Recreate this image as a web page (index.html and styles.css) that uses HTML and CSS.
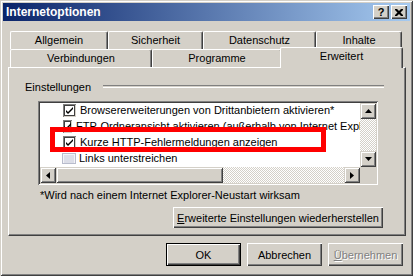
FILE: index.html
```html
<!DOCTYPE html>
<html lang="de">
<head>
    <meta charset="UTF-8">
    <title>Internetoptionen</title>
    <link rel="stylesheet" href="styles.css">
</head>
<body>
    <div class="window">
        <div class="titlebar">
            <span class="title">Internetoptionen</span>
            <div class="title-buttons">
                <span class="tbtn help">?</span>
                <span class="tbtn">
                    <svg width="8" height="7" viewBox="0 0 8 7">
                        <path d="M0 0h2l2 2 2-2h2v1l-2.5 2.5L8 6v1H6L4 5 2 7H0V6l2.5-2.5L0 1z" fill="#000"/>
                    </svg>
                </span>
            </div>
        </div>

        <div class="dialog-body">
            <div class="tabs">
                <div class="tab-row">
                    <div class="tab w-allgemein">Allgemein</div>
                    <div class="tab w-sicherheit">Sicherheit</div>
                    <div class="tab w-datenschutz">Datenschutz</div>
                    <div class="tab w-inhalte">Inhalte</div>
                </div>
                <div class="tab-row">
                    <div class="tab w-verbindungen">Verbindungen</div>
                    <div class="tab w-programme">Programme</div>
                    <div class="tab tab-active">Erweitert</div>
                </div>
            </div>

            <div class="panel">
                <div class="group-head">
                    <span class="group-label">Einstellungen</span>
                    <span class="etched-line"></span>
                </div>

                <div class="listbox">
                    <div class="list-rows">
                        <div class="row">
                            <span class="check"><svg width="9" height="9" viewBox="0 0 9 9"><path d="M1 4l2 2 5-5v2L3 8 1 6z" fill="#000"/></svg></span>
                            <span class="row-text">Browsererweiterungen von Drittanbietern aktivieren*</span>
                        </div>
                        <div class="row">
                            <span class="check"><svg width="9" height="9" viewBox="0 0 9 9"><path d="M1 4l2 2 5-5v2L3 8 1 6z" fill="#000"/></svg></span>
                            <span class="row-text">FTP-Ordneransicht aktivieren (außerhalb von Internet Explorer)</span>
                        </div>
                        <div class="row">
                            <span class="check"><svg width="9" height="9" viewBox="0 0 9 9"><path d="M1 4l2 2 5-5v2L3 8 1 6z" fill="#000"/></svg></span>
                            <span class="row-text">Kurze HTTP-Fehlermeldungen anzeigen</span>
                        </div>
                        <div class="row">
                            <span class="group-icon">
                                <svg width="14" height="11" viewBox="0 0 14 11">
                                    <rect x="0.5" y="0.5" width="13" height="10" fill="#f4f4f8" stroke="#b8bccc"/>
                                    <path d="M2 3h10M2 5h10M2 7h10M2 9h10" stroke="#c4c8d8"/>
                                </svg>
                            </span>
                            <span class="row-text">Links unterstreichen</span>
                        </div>
                    </div>
                    <div class="vscroll">
                        <span class="sbtn"><svg width="7" height="4" viewBox="0 0 7 4"><path d="M3.5 0L7 4H0z" fill="#000"/></svg></span>
                        <span class="track"></span>
                        <span class="sbtn"><svg width="7" height="4" viewBox="0 0 7 4"><path d="M0 0h7L3.5 4z" fill="#000"/></svg></span>
                    </div>
                    <div class="hscroll">
                        <span class="sbtn"><svg width="4" height="7" viewBox="0 0 4 7"><path d="M4 0v7L0 3.5z" fill="#000"/></svg></span>
                        <span class="thumb"></span>
                        <span class="track"></span>
                        <span class="sbtn"><svg width="4" height="7" viewBox="0 0 4 7"><path d="M0 0l4 3.5L0 7z" fill="#000"/></svg></span>
                    </div>
                    <div class="corner"></div>
                </div>

                <p class="note">*Wird nach einem Internet Explorer-Neustart wirksam</p>

                <div class="restore-row">
                    <button class="btn btn-restore"><u>E</u>rweiterte Einstellungen wiederherstellen</button>
                </div>
            </div>

            <div class="dialog-buttons">
                <button class="btn btn-default">OK</button>
                <button class="btn">Abbrechen</button>
                <button class="btn btn-disabled"><u>Ü</u>bernehmen</button>
            </div>
        </div>

        <!-- highlight drawn over the list -->
        <div class="highlight"></div>
    </div>
</body>
</html>
```

FILE: styles.css
```css
body {
    margin: 0;
    font-family: "Liberation Sans", Arial, sans-serif;
    font-size: 11px;
    color: #000;
    background: #d4d0c8;
    overflow: hidden;
}

.window {
    position: relative;
    box-sizing: border-box;
    width: 413px;
    height: 276px;
    padding: 3px;
    background: #d4d0c8;
    box-shadow: inset 1px 1px #d4d0c8, inset -1px -1px #404040,
                inset 2px 2px #ffffff, inset -2px -2px #808080;
}

/* Title bar */
.titlebar {
    display: flex;
    align-items: center;
    justify-content: space-between;
    height: 18px;
    padding: 0 3px 0 3px;
    background: linear-gradient(to right, #0a246a, #a6caf0);
}

.title {
    color: #fff;
    font-weight: bold;
    font-size: 12px;
}

.title-buttons {
    display: flex;
    gap: 2px;
}

.tbtn {
    box-sizing: border-box;
    display: flex;
    align-items: center;
    justify-content: center;
    width: 16px;
    height: 14px;
    background: #d4d0c8;
    box-shadow: inset 1px 1px #ffffff, inset -1px -1px #404040, inset -2px -2px #808080;
    font-weight: bold;
    font-size: 11px;
}

.help {
    padding-bottom: 1px;
}

/* Tabs */
.dialog-body {
    padding: 10px 4px 0 5px;
}

.tab-row {
    display: flex;
    height: 18px;
    margin-left: 2px;
}

.tab {
    box-sizing: border-box;
    display: flex;
    align-items: center;
    justify-content: center;
    border-top: 1px solid #fff;
    border-left: 1px solid #fff;
    border-right: 1px solid #404040;
    border-radius: 2px 2px 0 0;
    box-shadow: inset -1px 0 #808080;
    padding-bottom: 1px;
}

.w-allgemein { width: 98px; }
.w-sicherheit { width: 95px; }
.w-datenschutz { width: 113px; }
.w-inhalte { width: 86px; }
.w-verbindungen { width: 142px; }
.w-programme { width: 130px; }

.tab-active {
    position: relative;
    z-index: 1;
    width: 123px;
    height: 21px;
    margin: -2px 0 0 -2px;
    padding-bottom: 5px;
    background: #d4d0c8;
}

/* Panel */
.panel {
    box-sizing: border-box;
    height: 169px;
    border: 1px solid;
    border-color: #fff #404040 #404040 #fff;
    box-shadow: inset -1px -1px #808080;
}

.group-head {
    display: flex;
    align-items: center;
    height: 13px;
    margin: 12px 21px 0 16px;
}

.etched-line {
    flex: 1;
    height: 1px;
    margin-left: 12px;
    margin-top: -1px;
    border-top: 1px solid #808080;
    border-bottom: 1px solid #fff;
}

.listbox {
    box-sizing: border-box;
    display: grid;
    grid-template-columns: 1fr 16px;
    grid-template-rows: 64px 16px;
    width: 340px;
    height: 84px;
    margin: 8px 0 0 29px;
    background: #fff;
    box-shadow: inset 1px 1px #808080, inset -1px -1px #ffffff,
                inset 2px 2px #404040, inset -2px -2px #d4d0c8;
    padding: 2px;
}

.list-rows {
    overflow: hidden;
}

.row {
    display: flex;
    align-items: center;
    height: 16px;
    padding-left: 23px;
    white-space: nowrap;
}

.row:first-child {
    margin-top: -1px;
}

.row-text {
    margin-top: -1px;
}

.check {
    box-sizing: border-box;
    display: flex;
    align-items: center;
    justify-content: center;
    width: 13px;
    height: 13px;
    margin-right: 4px;
    background: #fff;
    box-shadow: inset 1px 1px #808080, inset -1px -1px #d4d0c8,
                inset 2px 2px #404040, inset -2px -2px #404040;
}

.group-icon {
    display: flex;
    width: 14px;
    margin: 0 3px 0 -1px;
}

/* Scrollbars */
.vscroll {
    display: flex;
    flex-direction: column;
}

.hscroll {
    display: flex;
}

.sbtn {
    box-sizing: border-box;
    display: flex;
    align-items: center;
    justify-content: center;
    flex: none;
    width: 16px;
    height: 16px;
    background: #d4d0c8;
    box-shadow: inset 1px 1px #d4d0c8, inset -1px -1px #404040,
                inset 2px 2px #ffffff, inset -2px -2px #808080;
}

.track {
    flex: 1;
    background-color: #e8e6e2;
    background-image: repeating-conic-gradient(#ffffff 0 25%, #d4d0c8 0 50%);
    background-size: 2px 2px;
}

.thumb {
    box-sizing: border-box;
    width: 167px;
    background: #d4d0c8;
    box-shadow: inset 1px 1px #d4d0c8, inset -1px -1px #404040,
                inset 2px 2px #ffffff, inset -2px -2px #808080;
}

.corner {
    background: #d4d0c8;
}

.note {
    margin: 4px 0 0 31px;
    line-height: 13px;
}

.restore-row {
    display: flex;
    justify-content: flex-end;
    margin: 5px 22px 0 0;
}

/* Buttons */
.btn {
    box-sizing: border-box;
    height: 23px;
    padding: 0;
    border: none;
    font-family: inherit;
    font-size: 11px;
    color: #000;
    background: #d4d0c8;
    box-shadow: inset 1px 1px #ffffff, inset -1px -1px #404040, inset -2px -2px #808080;
}

.btn-restore {
    width: 210px;
    height: 21px;
}

.dialog-buttons {
    display: flex;
    justify-content: flex-end;
    gap: 6px;
    margin: 7px 3px 0 0;
}

.dialog-buttons .btn {
    width: 75px;
}

.btn-default {
    border: 1px solid #000;
}

.btn-disabled {
    color: #808080;
    text-shadow: 1px 1px #fff;
}

.highlight {
    position: absolute;
    left: 50px;
    top: 127px;
    width: 276px;
    height: 25px;
    box-sizing: border-box;
    border: 5px solid #ff0000;
}
```
